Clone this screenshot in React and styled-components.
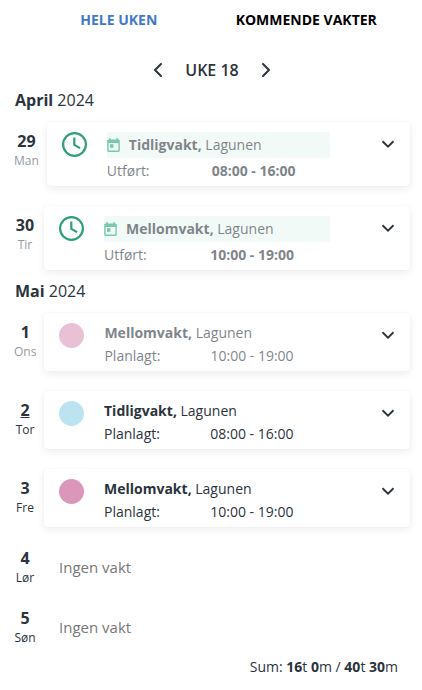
import React, { useState } from 'react'
import styled, { createGlobalStyle } from 'styled-components';
import { ChevronDown, ChevronLeft, ChevronRight } from 'lucide-react';

const GlobalStyle = createGlobalStyle`
  * {
    box-sizing: border-box;
  }
  body {
    margin: 0;
    background: #ffffff;
    color: #2b343d;
    font-family: "Open Sans", "Noto Sans", sans-serif;
    font-size: 14px;
  }
  button {
    font-family: inherit;
    border: none;
    background: none;
    padding: 0;
    cursor: pointer;
  }
`;

const Page = styled.main`
  padding: 8px 12px 12px 14px;
`;

const Tabs = styled.nav`
  display: grid;
  grid-template-columns: 1fr 1fr;
  padding: 0 10px 0 11px;
`;

const Tab = styled.button`
  font-size: 14px;
  font-weight: 700;
  line-height: 24px;
  text-transform: uppercase;
  color: ${({ $active }) => ($active ? '#4179c8' : '#000000')};
`;

const WeekNav = styled.div`
  display: flex;
  justify-content: center;
  align-items: center;
  gap: 15px;
  margin-top: 26px;
`;

const WeekTitle = styled.h1`
  margin: 0;
  font-size: 16px;
  font-weight: 600;
  line-height: 24px;
`;

const IconButton = styled.button`
  display: flex;
  color: #2b343d;
`;

const Months = styled.div`
  display: flex;
  flex-direction: column;
  gap: 10px;
  margin-top: 7px;
`;

const Month = styled.h2`
  margin: 0 0 10px;
  padding-left: 1px;
  font-size: 16px;
  font-weight: 400;
  line-height: 23px;
`;

const Strong = styled.strong`
  font-weight: ${({ $weight }) => $weight || 600};
`;

const Days = styled.div`
  display: flex;
  flex-direction: column;
  gap: 20px;
`;

const DayRow = styled.div`
  display: flex;
  align-items: flex-start;
  gap: 8px;
`;

const DayLabel = styled.div`
  min-width: 22px;
  padding-top: ${({ $offset }) => ($offset ? '8px' : '0')};
  text-align: center;
`;

const DayNumber = styled.div`
  font-size: 16px;
  font-weight: 700;
  line-height: 22px;
  text-decoration: ${({ $today }) => ($today ? 'underline' : 'none')};
`;

const Weekday = styled.div`
  font-size: 12px;
  line-height: 18px;
  opacity: ${({ $past }) => ($past ? 0.5 : 1)};
`;

const Card = styled.section`
  flex: 1;
  display: flex;
  align-items: flex-start;
  padding: 8px 11px 4px 15px;
  border-radius: 4px;
  background: #ffffff;
  box-shadow: 0 3px 8px rgba(0, 0, 0, 0.07), 0 0 2px rgba(0, 0, 0, 0.06);
`;

const Marker = styled.div`
  width: 25px;
  height: 25px;
  margin: 2px 20px 0 0;
  border-radius: 50%;
  background: ${({ $color }) => $color || 'transparent'};
  opacity: ${({ $past }) => ($past ? 0.6 : 1)};

  svg {
    display: block;
  }
`;

const Details = styled.div`
  flex: 1;
  line-height: 23px;
  opacity: ${({ $past }) => ($past ? 0.6 : 1)};
`;

const ShiftName = styled.div`
  display: flex;
  align-items: center;
  gap: 9px;
`;

const DoneShiftName = styled(ShiftName)`
  height: 26px;
  margin: 2px 0 1px;
  line-height: 24px;
  background: #e9f7f3;
`;

const Times = styled.div`
  display: grid;
  grid-template-columns: 47% 1fr;
`;

const Expand = styled(IconButton)`
  margin: 3px 0 0 47px;
`;

const Empty = styled.div`
  padding-left: 15px;
  font-size: 15px;
  line-height: 40px;
  color: #777777;
`;

const Sum = styled.div`
  margin: 9px 12px 0 0;
  text-align: right;
  line-height: 22px;
`;

const ClockIcon = () => (
  <svg width="25" height="25" viewBox="0 0 25 25" fill="none" stroke="#2f9f78" strokeWidth="2.2">
    <circle cx="12.5" cy="12.5" r="11.4" />
    <path d="M12.3 5.5v7.4l5.8 3.2" />
  </svg>
);

const CalendarIcon = () => (
  <svg width="13" height="14" viewBox="3 1 18 20" fill="#1fa577">
    <path d="M19 3h-1V1h-2v2H8V1H6v2H5c-1.11 0-1.99.9-1.99 2L3 19c0 1.1.89 2 2 2h14c1.1 0 2-.9 2-2V5c0-1.1-.9-2-2-2zm0 16H5V8h14v11zM7 10h5v5H7z" />
  </svg>
);

const months = [
  {
    name: 'April',
    year: 2024,
    days: [
      { number: 29, weekday: 'Man', past: true, shift: { name: 'Tidligvakt', place: 'Lagunen', time: '08:00 - 16:00', done: true } },
      { number: 30, weekday: 'Tir', past: true, shift: { name: 'Mellomvakt', place: 'Lagunen', time: '10:00 - 19:00', done: true } },
    ],
  },
  {
    name: 'Mai',
    year: 2024,
    days: [
      { number: 1, weekday: 'Ons', past: true, shift: { name: 'Mellomvakt', place: 'Lagunen', time: '10:00 - 19:00', color: '#db97ba' } },
      { number: 2, weekday: 'Tor', today: true, shift: { name: 'Tidligvakt', place: 'Lagunen', time: '08:00 - 16:00', color: '#bbe4f0' } },
      { number: 3, weekday: 'Fre', shift: { name: 'Mellomvakt', place: 'Lagunen', time: '10:00 - 19:00', color: '#db97ba' } },
      { number: 4, weekday: 'Lør' },
      { number: 5, weekday: 'Søn' },
    ],
  },
];

const ShiftCard = ({ shift, past }) => {
  const Name = shift.done ? DoneShiftName : ShiftName;
  return (
    <Card>
      <Marker $color={shift.color} $past={past && !shift.done}>
        {shift.done && <ClockIcon />}
      </Marker>
      <Details $past={past}>
        <Name>
          {shift.done && <CalendarIcon />}
          <span><Strong $weight={700}>{shift.name},</Strong> {shift.place}</span>
        </Name>
        <Times>
          <span>{shift.done ? 'Utført:' : 'Planlagt:'}</span>
          {shift.done ? <Strong $weight={700}>{shift.time}</Strong> : <span>{shift.time}</span>}
        </Times>
      </Details>
      <Expand aria-label="Vis detaljer">
        <ChevronDown size={22} strokeLinecap="butt" strokeLinejoin="miter" />
      </Expand>
    </Card>
  );
};

const Day = ({ day }) => (
  <DayRow>
    <DayLabel $offset={!!day.shift}>
      <DayNumber $today={day.today}>{day.number}</DayNumber>
      <Weekday $past={day.past}>{day.weekday}</Weekday>
    </DayLabel>
    {day.shift ? <ShiftCard shift={day.shift} past={day.past} /> : <Empty>Ingen vakt</Empty>}
  </DayRow>
);

const App = () => {
  const [tab, setTab] = useState('week');
  return (
    <>
      <GlobalStyle />
      <Page>
        <Tabs>
          <Tab $active={tab === 'week'} onClick={() => setTab('week')}>Hele uken</Tab>
          <Tab $active={tab === 'upcoming'} onClick={() => setTab('upcoming')}>Kommende vakter</Tab>
        </Tabs>
        <WeekNav>
          <IconButton aria-label="Forrige uke"><ChevronLeft size={24} /></IconButton>
          <WeekTitle>UKE 18</WeekTitle>
          <IconButton aria-label="Neste uke"><ChevronRight size={24} /></IconButton>
        </WeekNav>
        <Months>
          {months.map((month) => (
            <section key={month.name}>
              <Month><Strong $weight={700}>{month.name}</Strong> {month.year}</Month>
              <Days>
                {month.days.map((day) => <Day key={day.number} day={day} />)}
              </Days>
            </section>
          ))}
        </Months>
        <Sum>
          Sum: <Strong $weight={700}>16</Strong>t <Strong $weight={700}>0</Strong>m / <Strong $weight={700}>40</Strong>t <Strong $weight={700}>30</Strong>m
        </Sum>
      </Page>
    </>
  )
}
export default App
